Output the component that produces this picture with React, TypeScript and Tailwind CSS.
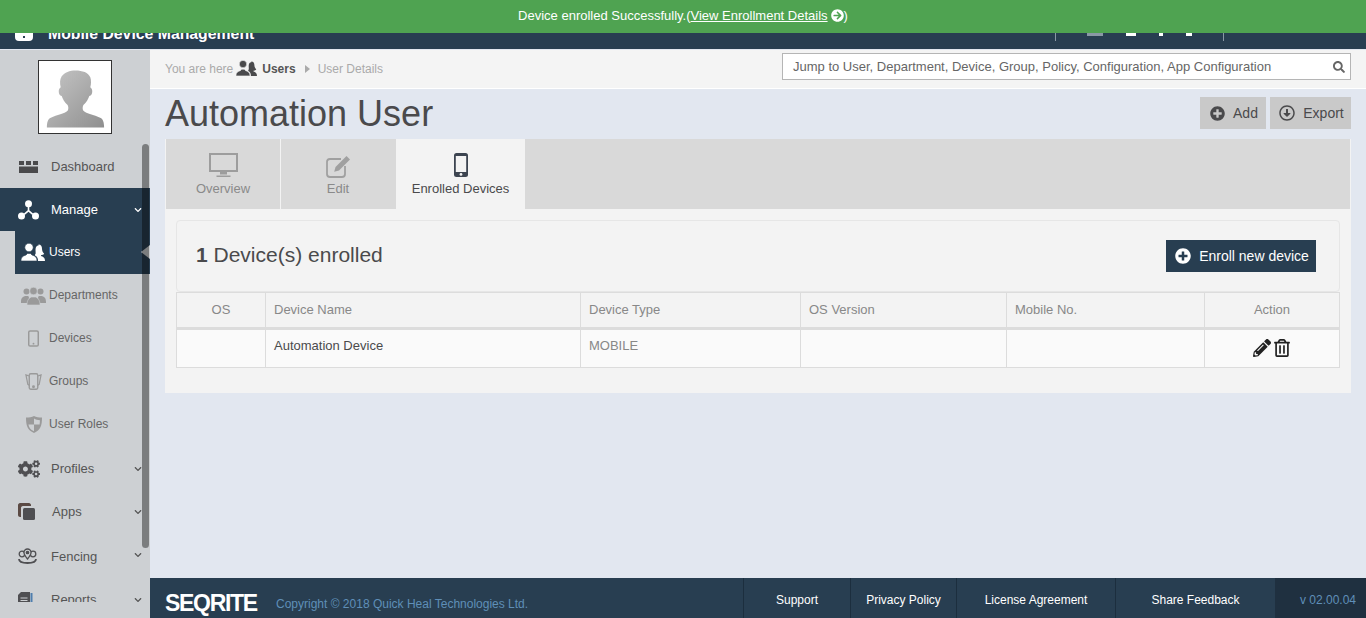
import {
  FaArrowCircleRight,
  FaChevronDown,
  FaCogs,
  FaPencilAlt,
  FaPlusCircle,
  FaRegArrowAltCircleDown,
  FaRegTrashAlt,
  FaSearch,
} from "react-icons/fa";

const Avatar = () => (
  <svg viewBox="0 0 72 72" className="w-full h-full">
    <defs>
      <linearGradient id="av" x1="0" y1="0" x2="1" y2="1">
        <stop offset="0" stopColor="#c6c6c6" />
        <stop offset="1" stopColor="#8f8f8f" />
      </linearGradient>
    </defs>
    <path
      fill="url(#av)"
      d="M7 67c0-5 1-9 4-10 6-3 14-4 17-7 1-2 1-4 0-6-3-2-5-6-6-9-2 0-3-2-3-5 0-2 1-3 2-4-1-4-1-8 1-11 3-4 8-6 14-6 7 0 13 2 15 7 1 3 1 7 0 10 1 1 2 2 2 4 0 3-1 5-3 5-1 3-3 7-6 9-1 2-1 4 0 6 3 3 11 4 17 7 3 1 4 5 4 10z"
    />
  </svg>
);

const DashboardIcon = () => (
  <svg viewBox="0 0 19 13" className="w-[19px] h-[13px]" fill="#4a4a4c">
    <rect x="0" y="1" width="5" height="4" />
    <rect x="7" y="1" width="5" height="4" />
    <rect x="14" y="1" width="5" height="4" />
    <rect x="0" y="6.5" width="19" height="6.5" />
  </svg>
);

const ManageIcon = () => (
  <svg viewBox="0 0 21 20" className="w-[21px] h-[20px]" fill="#fff">
    <circle cx="10.5" cy="3.7" r="3.5" />
    <circle cx="3.5" cy="16" r="3.5" />
    <circle cx="17.5" cy="16" r="3.5" />
    <path d="M9.700 6h1.600v4.200l4 3.600-1 1.200-3.800-3.200-3.800 3.200-1-1.200 4-3.600z" />
  </svg>
);

// man and woman side by side, used for the Users entry
const UserPairIcon = ({ className, color, gap }: { className: string; color: string; gap: string }) => (
  <svg viewBox="0 0 24 18" className={className} fill={color}>
    <path d="M17.500 1.500c2.500 0 3.500 2 3.500 4.200 0 2 1 4 2.200 5-.9 1-2 1.300-3.200 1.500v.8c2 .5 4 1.500 4 5h-7c0-3-1-4.500-3-5.500v-1c1-.5.500-2.800.500-4.800 0-2.200 1-4.200 3-4.200z" />
    <circle cx="8" cy="4.500" r="4.200" stroke={gap} strokeWidth="0.600" />
    <path d="M0 18c0-4 2-5 5-6l1.500-1.500h3L11 12c3 1 5 2 5 6z" stroke={gap} strokeWidth="0.600" />
  </svg>
);

const PeopleIcon = () => (
  <svg viewBox="0 0 25 18" className="w-[25px] h-[18px]" fill="#9a9a9a">
    <circle cx="5.500" cy="4.500" r="3" />
    <circle cx="19.500" cy="4.500" r="3" />
    <path d="M0 15c0-4 1.500-5 4-6h3l1 1-1 6H0zM25 15c0-4-1.500-5-4-6h-3l-1 1 1 6h7z" />
    <circle cx="12.500" cy="4" r="3.800" stroke="#cdd0d3" strokeWidth="0.600" />
    <path d="M6 18c0-5 2-7 4.500-8h4c2.500 1 4.500 3 4.500 8z" stroke="#cdd0d3" strokeWidth="0.600" />
  </svg>
);

const PhoneIcon = ({ className, color }: { className: string; color: string }) => (
  <svg viewBox="0 0 14 24" className={className}>
    <rect x="0" y="0" width="14" height="24" rx="2.5" fill={color} />
    <rect x="1.8" y="3" width="10.4" height="16" fill="#f3f3f3" />
    <circle cx="7" cy="21.4" r="1.4" fill="#f3f3f3" />
  </svg>
);

const DeviceOutline = () => (
  <svg viewBox="0 0 12 18" className="w-[11px] h-[17px]">
    <rect x="0.8" y="0.8" width="10.4" height="16.4" rx="1.5" fill="none" stroke="#9a9a9a" strokeWidth="1.6" />
    <circle cx="6" cy="14.6" r="1" fill="#9a9a9a" />
  </svg>
);

const GroupsIcon = () => (
  <svg viewBox="0 0 18 18" className="w-[17px] h-[17px]" fill="none" stroke="#9a9a9a" strokeWidth="1.5">
    <path d="M4 3 1 2l2 10 1.500 1M14 3l3-1-2 10-1.500 1" strokeWidth="1.300" />
    <rect x="4.500" y="0.800" width="9" height="16.400" rx="1.500" />
    <circle cx="9" cy="14.500" r="0.800" fill="#9a9a9a" />
  </svg>
);

const ShieldIcon = () => (
  <svg viewBox="0 0 16 17" className="w-[16px] h-[17px]" fill="#9a9a9a">
    <path d="M8 0c2 1 5 1.500 8 1.500 0 8-1.500 12.500-8 15.500C1.500 14 0 9.500 0 1.500 3 1.500 6 1 8 0zm0 2.500v6H2.400c.5 3 2 5.200 5.600 6.800V8.500h5.600c.2-1.200.3-2.400.3-4.200-2-.2-4.200-.8-5.900-1.800z" />
  </svg>
);

const AppsIcon = () => (
  <svg viewBox="0 0 17 17" className="w-[17px] h-[17px]">
    <path d="M2 0h9c1 0 2 1 2 2v1H5C3.500 3 3 4 3 5v9H2c-1 0-2-1-2-2V2C0 1 1 0 2 0z" fill="#5b4a44" />
    <rect x="5" y="5" width="12" height="12" rx="1.500" fill="#4f4f52" />
  </svg>
);

const FencingIcon = () => (
  <svg viewBox="0 0 19 16" className="w-[19px] h-[16px]" fill="none" stroke="#4f4f52" strokeWidth="1.300">
    <circle cx="4" cy="6" r="2.800" />
    <circle cx="15" cy="6" r="2.800" />
    <path d="M9.500 11C7 8 6 6.500 6 4.500a3.500 3.500 0 0 1 7 0c0 2-1 3.500-3.500 6.500z" fill="#cdd0d3" />
    <circle cx="9.500" cy="4.500" r="1.200" fill="#4f4f52" />
    <path d="M1 11c0 3 3 4 8.500 4s8.500-1 8.500-4" strokeWidth="1.800" />
  </svg>
);

const ReportsIcon = () => (
  <svg viewBox="0 0 15 16" className="w-[15px] h-[16px]">
    <path d="M3 0h9v16H0V3z" fill="#4f4f52" />
    <rect x="12.500" y="1" width="2" height="15" fill="#4f7eae" />
    <path d="M2.500 6h7M2.500 8.500h7M2.500 11h5" stroke="#cdd0d3" strokeWidth="1" />
  </svg>
);

const MonitorIcon = () => (
  <svg viewBox="0 0 29 25" className="w-[29px] h-[25px]" fill="#9d9d9d">
    <path d="M0 0h29v19H0zM2 2v15h25V2z" fill="#9d9d9d" fillRule="evenodd" />
    <path d="M11 19h7v2.500h-7zM7.500 22.500h14V24h-14z" />
  </svg>
);

const EditIcon = () => (
  <svg viewBox="0 0 25 23" className="w-[25px] h-[23px]">
    <path d="M15 4H4a3 3 0 0 0-3 3v12a3 3 0 0 0 3 3h12a3 3 0 0 0 3-3v-8" fill="none" stroke="#a0a0a0" strokeWidth="1.800" />
    <path d="M20.500 1 24 4.500 13 15.500l-4.800 1.300L9.500 12z" fill="#a0a0a0" />
  </svg>
);

const subItems = [
  { label: "Departments", icon: <PeopleIcon /> },
  { label: "Devices", icon: <DeviceOutline /> },
  { label: "Groups", icon: <GroupsIcon /> },
  { label: "User Roles", icon: <ShieldIcon /> },
];

const menuItems = [
  { label: "Profiles", icon: <FaCogs size={22} color="#4f4f52" />, row: "h-[43px] pl-[51px]" },
  { label: "Apps", icon: <AppsIcon />, row: "h-[43px] pl-[52px]" },
  { label: "Fencing", icon: <FencingIcon />, row: "h-[45px] pl-[51px] pt-[2px]" },
  { label: "Reports", icon: <ReportsIcon />, row: "h-[43px] pl-[51px]" },
];

const Sidebar = () => (
  <aside className="relative w-[150px] shrink-0 bg-[#cdd0d3] overflow-hidden">
    <div className="flex justify-center pt-[10px] pb-[11px]">
      <div className="w-[74px] h-[74px] bg-white border border-[#333] pl-px">
        <Avatar />
      </div>
    </div>

    <nav className="h-[457px] overflow-hidden text-[13px] text-[#555]">
      <div className="relative h-[43px] flex items-center pl-[51px]">
        <span className="absolute left-[19px] top-[15px]"><DashboardIcon /></span>
        Dashboard
      </div>

      <div className="relative h-[43px] flex items-center pl-[51px] bg-[#283e51] text-white">
        <span className="absolute left-[18px] top-[12px]"><ManageIcon /></span>
        Manage
        <FaChevronDown size={8} color="#fff" className="absolute left-[134px] top-[18px]" />
      </div>

      <div className="relative ml-[15px] h-[43px] flex items-center pl-[34px] pb-[2px] bg-[#283e51] text-white text-[12px]">
        <span className="absolute left-[6px] top-[12px]">
          <UserPairIcon className="w-[24px] h-[18px]" color="#fff" gap="#283e51" />
        </span>
        Users
        <span className="absolute right-0 top-[14px] w-0 h-0 border-y-[7px] border-y-transparent border-r-[9px] border-r-[#cdd0d3]" />
      </div>

      {subItems.map((item) => (
        <div key={item.label} className="relative ml-[15px] h-[43px] flex items-center pl-[34px] pb-[2px] text-[12px] text-[#666]">
          <span className="absolute left-[6px] top-0 h-full w-[25px] flex items-center justify-center">{item.icon}</span>
          {item.label}
        </div>
      ))}

      <div className="h-px" />

      {menuItems.map((item) => (
        <div key={item.label} className={`relative flex items-center ${item.row}`}>
          <span className="absolute left-[18px] top-0 h-full flex items-center">{item.icon}</span>
          {item.label}
          <FaChevronDown size={8} color="#555" className="absolute left-[134px] top-[18px]" />
        </div>
      ))}
    </nav>

    {/* scrollbar */}
    <div className="absolute left-[142px] top-[94px] w-[7px] h-[404px] rounded bg-black/40" />
  </aside>
);

const Main = () => (
  <main className="flex-1 min-w-0 flex flex-col bg-[#e2e7f0]">
    <div className="h-[39px] shrink-0 flex items-center bg-[#f4f4f4] border-b border-white pl-[15px] pr-[15px] text-[12px]">
      <span className="text-[#aaa]">You are here</span>
      <UserPairIcon className="ml-[3px] mr-[5px] w-[21px] h-[16px] mb-[3px]" color="#4a4a4c" gap="#f4f4f4" />
      <span className="font-bold text-[#555]">Users</span>
      <span className="ml-[9px] mr-[8px] w-0 h-0 border-y-[4px] border-y-transparent border-l-[5px] border-l-[#aaa]" />
      <span className="text-[#aaa]">User Details</span>
      <div className="ml-auto w-[569px] h-[27px] mb-[5px] bg-white border border-[#b5b5b5] flex items-center pl-[10px] pr-[5px] text-[#666]">
        <span className="flex-1 text-[13px]">Jump to User, Department, Device, Group, Policy, Configuration, App Configuration</span>
        <FaSearch size={12} color="#666" />
      </div>
    </div>

    <div className="flex-1 px-[15px]">
      <div className="h-[50px] flex items-start">
        <h1 className="text-[36px] leading-[50px] text-[#4a4a4c]">Automation User</h1>
        <div className="ml-auto mt-[8px] flex gap-[4px] text-[14px] text-[#4a4a4c]">
          <button className="h-[32px] w-[66px] pl-[2px] bg-[#c9c9c9] flex items-center justify-center gap-[8px]">
            <FaPlusCircle size={15} color="#4a4a4c" />
            Add
          </button>
          <button className="h-[32px] w-[81px] pl-[2px] bg-[#c9c9c9] flex items-center justify-center gap-[8px]">
            <FaRegArrowAltCircleDown size={16} color="#4a4a4c" />
            Export
          </button>
        </div>
      </div>

      <section className="bg-[#f3f3f3] px-px pb-[25px]">
        <div className="h-[70px] bg-[#d9d9d9] flex text-[13px]">
          <div className="w-[114px] flex flex-col items-center text-[#8a8a8a] pt-[14px]">
            <MonitorIcon />
            <span className="mt-[1px]">Overview</span>
          </div>
          <div className="w-px bg-[#f3f3f3]" />
          <div className="w-[114px] flex flex-col items-center text-[#8a8a8a] pt-[16px]">
            <EditIcon />
            <span className="mt-[1px]">Edit</span>
          </div>
          <div className="w-px" />
          <div className="w-[129px] bg-[#f3f3f3] flex flex-col items-center text-[#4a4a4c] pt-[14px]">
            <PhoneIcon className="w-[14px] h-[24px]" color="#3c4450" />
            <span className="mt-[2px]">Enrolled Devices</span>
          </div>
        </div>

        <div className="mx-[10px] mt-[11px]">
          <div className="h-[72px] flex items-center justify-between rounded border border-[#e6e6e6] bg-[#f3f3f3] pl-[19px] pr-[23px] pb-[2px] text-[#4a4a4c]">
            <p className="text-[21px]"><b>1</b> Device(s) enrolled</p>
            <button className="h-[32px] w-[150px] mt-[2px] pl-[2px] bg-[#283e51] text-white text-[14px] flex items-center justify-center gap-[8px]">
              <FaPlusCircle size={16} color="#fff" />
              Enroll new device
            </button>
          </div>

          <table className="w-full table-fixed border-collapse text-[13px]">
            <colgroup>
              <col className="w-[89px]" />
              <col className="w-[315px]" />
              <col className="w-[220px]" />
              <col className="w-[206px]" />
              <col className="w-[198px]" />
              <col />
            </colgroup>
            <thead>
              <tr className="h-[36px] text-[#888] border-b-[3px] border-[#dcdcdc]">
                <th className="font-normal text-center border border-[#dcdcdc]">OS</th>
                <th className="font-normal text-left pl-[8px] border border-[#dcdcdc]">Device Name</th>
                <th className="font-normal text-left pl-[8px] border border-[#dcdcdc]">Device Type</th>
                <th className="font-normal text-left pl-[8px] border border-[#dcdcdc]">OS Version</th>
                <th className="font-normal text-left pl-[8px] border border-[#dcdcdc]">Mobile No.</th>
                <th className="font-normal text-center border border-[#dcdcdc]">Action</th>
              </tr>
            </thead>
            <tbody>
              <tr className="h-[39px] bg-[#fafafa]">
                <td className="border border-[#dcdcdc]" />
                <td className="pl-[8px] pb-[5px] text-[#4a4a4c] border border-[#dcdcdc]">Automation Device</td>
                <td className="pl-[8px] pb-[5px] text-[#888] border border-[#dcdcdc]">MOBILE</td>
                <td className="border border-[#dcdcdc]" />
                <td className="border border-[#dcdcdc]" />
                <td className="border border-[#dcdcdc]">
                  <div className="flex justify-center items-center gap-[2px] pb-[2px]">
                    <FaPencilAlt size={18} color="#222" />
                    <FaRegTrashAlt size={18} color="#222" />
                  </div>
                </td>
              </tr>
            </tbody>
          </table>
        </div>
      </section>
    </div>

    <footer className="h-[40px] shrink-0 bg-[#283e51] flex items-center text-[12px]">
      <span className="ml-[15px] w-[111px] mt-[10px] font-bold text-[23px] tracking-[-1.300px] text-white">SEQRITE</span>
      <span className="text-[#5f8fb8] mt-[11px]">Copyright © 2018 Quick Heal Technologies Ltd.</span>
      <div className="ml-auto h-full flex text-white">
        <a className="w-[107px] flex items-center justify-center border-l border-[#1c2e3e] pt-[4px]">Support</a>
        <a className="w-[106px] flex items-center justify-center border-l border-[#1c2e3e] pt-[4px]">Privacy Policy</a>
        <a className="w-[159px] flex items-center justify-center border-l border-[#1c2e3e] pt-[4px]">License Agreement</a>
        <a className="w-[160px] flex items-center justify-center border-l border-[#1c2e3e] pt-[4px]">Share Feedback</a>
        <span className="w-[91px] flex items-center justify-end pr-[10px] pt-[4px] bg-[#1f3040] text-[#5f8fb8]">v 02.00.04</span>
      </div>
    </footer>
  </main>
);

export default function App() {
  return (
    <div className="relative h-[618px] flex flex-col overflow-hidden font-['Liberation_Sans',Arial,sans-serif]">
      <header className="h-[50px] shrink-0 bg-[#283e51] flex items-center pt-[18px] pl-[15px] pr-[142px] text-white border-b border-[#e2e7f0]">
        <span className="relative w-[18px] h-[14px] bg-white rounded-sm">
          <span className="absolute left-[8px] top-[9px] w-[2px] h-[2px] bg-[#283e51]" />
        </span>
        <span className="ml-[15px] font-bold text-[15.800px]">Mobile Device Management</span>
        <div className="ml-auto flex items-start h-[14px]">
          <span className="w-px h-[14px] bg-[#8a98a5]" />
          <div className="w-[167px] flex justify-around px-[20px]">
            <span className="w-[16px] h-[9px] bg-[#8a98a5]" />
            <span className="w-[10px] h-[9px] bg-white" />
            <span className="w-[4px] h-[9px] bg-white" />
            <span className="w-[6px] h-[9px] bg-white" />
          </div>
          <span className="w-px h-[14px] bg-[#8a98a5]" />
        </div>
      </header>

      <div className="flex-1 min-h-0 flex">
        <Sidebar />
        <Main />
      </div>

      {/* enrollment notification */}
      <div className="absolute inset-x-0 top-0 h-[33px] pb-[2px] bg-[#4fa351] text-white text-[13px] flex items-center justify-center">
        Device enrolled Successfully.(
        <span className="underline">View Enrollment Details</span>
        <FaArrowCircleRight size={13} className="ml-[3px]" />)
      </div>
    </div>
  );
}
